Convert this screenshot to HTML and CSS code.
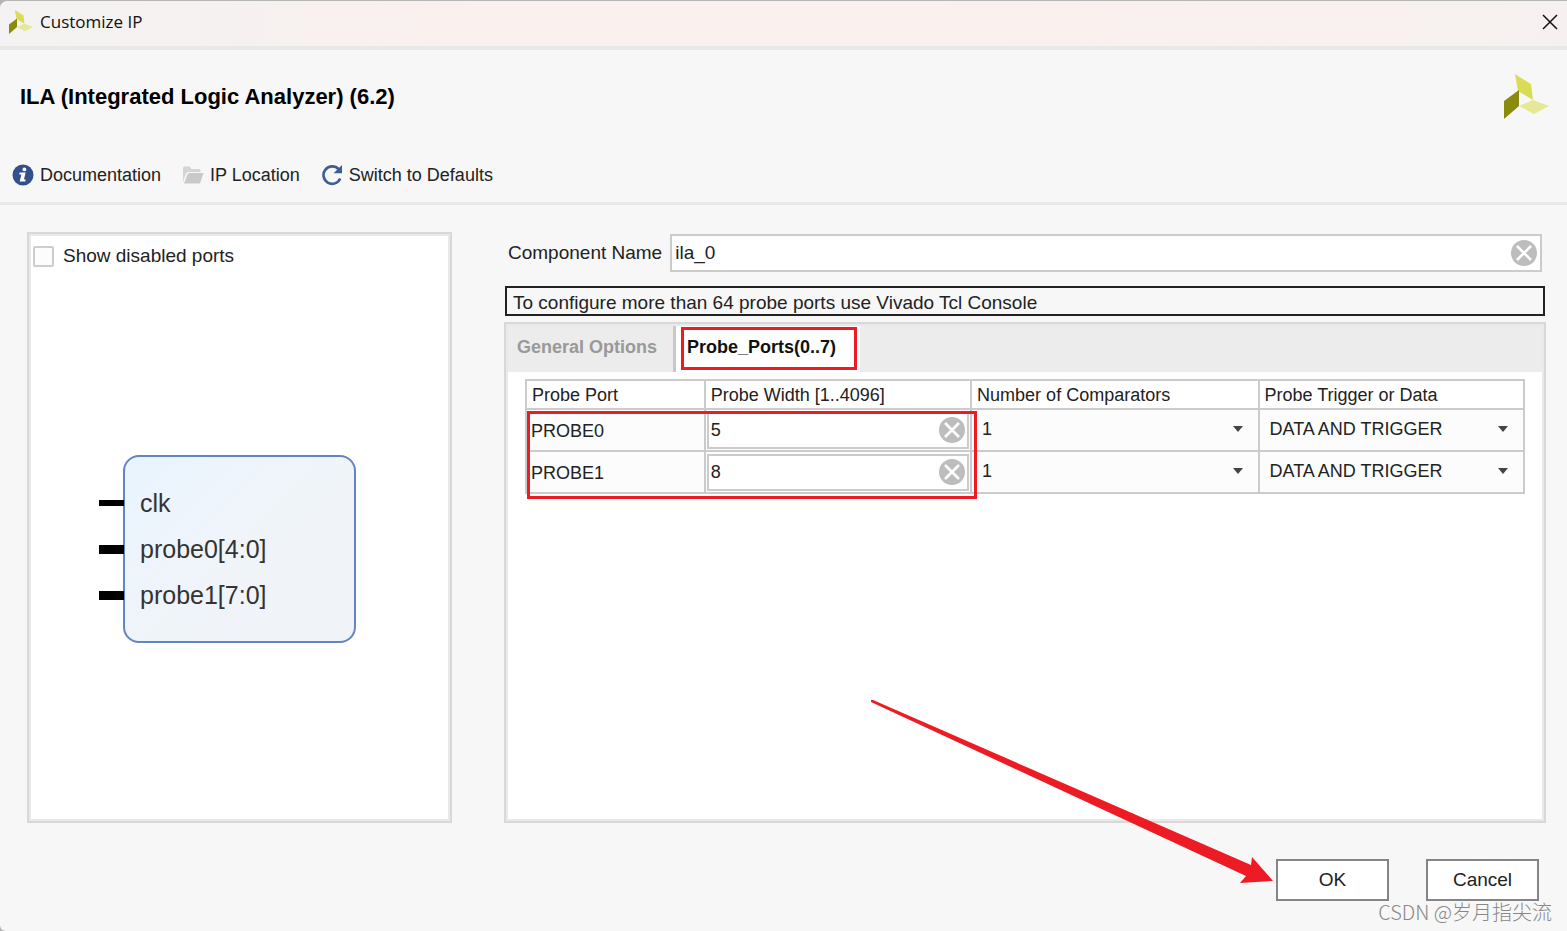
FILE: index.html
```html
<!DOCTYPE html>
<html lang="en">
<head>
<meta charset="utf-8">
<title>Customize IP</title>
<link rel="stylesheet" href="styles.css">
</head>
<body>
<svg class="defs" aria-hidden="true">
  <symbol id="logo" viewBox="0 0 45 45">
    <path d="M11 0 27 10 29 26 14 17Z" fill="#dbdc55"/>
    <path d="M0 27 15 16V32L0 45Z" fill="#8a8b0c"/>
    <path d="M15 32 29 26 45 32 30 40Z" fill="#e6e896"/>
  </symbol>
  <symbol id="clear" viewBox="0 0 26 26">
    <circle cx="13" cy="13" r="13" fill="#bdbdbd"/>
    <path d="M6 6 20 20M20 6 6 20" stroke="#fff" stroke-width="2.6" fill="none"/>
  </symbol>
  <symbol id="caret" viewBox="0 0 10 6">
    <path d="M0 0H10L5 6Z" fill="#444"/>
  </symbol>
</svg>
<main class="dialog">
  <header class="titlebar">
    <svg class="titlebar-logo"><use href="#logo"/></svg>
    <span class="titlebar-text">Customize IP</span>
    <button class="close" type="button" aria-label="Close">
      <svg viewBox="0 0 16 16" width="16" height="16"><path d="M1 1 15 15M15 1 1 15" stroke="#111" stroke-width="1.5"/></svg>
    </button>
  </header>

  <section class="head">
    <div class="head-row">
      <h1>ILA (Integrated Logic Analyzer) (6.2)</h1>
      <svg class="head-logo"><use href="#logo"/></svg>
    </div>
    <nav class="toolbar">
      <button class="tool" type="button">
        <svg viewBox="0 0 22 22" width="22" height="22"><circle cx="11" cy="11" r="10.5" fill="#32508a"/><circle cx="12.400" cy="5.400" r="1.900" fill="#fff"/><path d="M7.600 8.600H13.600L12 15.600H13.700L13.300 17.600H7.700L9.400 10.400H7.200Z" fill="#fff"/></svg>
        Documentation
      </button>
      <button class="tool" type="button">
        <svg viewBox="0 0 22 22" width="22" height="22"><path d="M1 18V4Q1 2.5 2.500 2.500H7.500L9.500 5H17Q18.500 5 18.500 6.500V8H6.500Q4.800 8 4 9.500Z" fill="#d4d4d4"/><path d="M2 19.500 5.500 10.500Q6 9 7.500 9H21.500L18.500 18Q18 19.500 16.500 19.500Z" fill="#c9c9c9"/></svg>
        IP Location
      </button>
      <button class="tool" type="button">
        <svg viewBox="0 0 22 22" width="22" height="22"><path d="M17.600 5.200A8.700 8.700 0 1 0 19.200 14.500" fill="none" stroke="#3e5d94" stroke-width="2.600"/><path d="M21 1V9.200H12.600Z" fill="#3e5d94"/></svg>
        Switch to Defaults
      </button>
    </nav>
  </section>

  <section class="content">
    <div class="panel ports">
      <label class="check"><input type="checkbox">Show disabled ports</label>
      <div class="symbol-area">
        <ul class="symbol">
          <li>clk</li>
          <li class="bus">probe0[4:0]</li>
          <li class="bus">probe1[7:0]</li>
        </ul>
      </div>
    </div>

    <div class="config">
      <div class="name-row">
        <label for="component">Component Name</label>
        <div class="field">
          <input id="component" type="text" value="ila_0">
          <button class="clear" type="button" aria-label="Clear name"><svg><use href="#clear"/></svg></button>
        </div>
      </div>
      <p class="note">To configure more than 64 probe ports use Vivado Tcl Console</p>
      <div class="panel options">
        <div class="tabs" role="tablist">
          <button class="tab" type="button" role="tab" aria-selected="false">General Options</button>
          <button class="tab tab-active" type="button" role="tab" aria-selected="true">Probe_Ports(0..7)</button>
        </div>
        <div class="table-wrap">
          <table>
            <colgroup><col class="c-port"><col class="c-width"><col class="c-comp"><col class="c-data"></colgroup>
            <thead>
              <tr><th>Probe Port</th><th>Probe Width [1..4096]</th><th>Number of Comparators</th><th>Probe Trigger or Data</th></tr>
            </thead>
            <tbody>
              <tr>
                <td class="port">PROBE0</td>
                <td><div class="field"><input type="text" value="5" aria-label="PROBE0 width"><button class="clear" type="button" aria-label="Clear PROBE0 width"><svg><use href="#clear"/></svg></button></div></td>
                <td><div class="drop"><select aria-label="PROBE0 comparators"><option>1</option></select><svg><use href="#caret"/></svg></div></td>
                <td><div class="drop"><select aria-label="PROBE0 trigger or data"><option>DATA AND TRIGGER</option></select><svg><use href="#caret"/></svg></div></td>
              </tr>
              <tr>
                <td class="port">PROBE1</td>
                <td><div class="field"><input type="text" value="8" aria-label="PROBE1 width"><button class="clear" type="button" aria-label="Clear PROBE1 width"><svg><use href="#clear"/></svg></button></div></td>
                <td><div class="drop"><select aria-label="PROBE1 comparators"><option>1</option></select><svg><use href="#caret"/></svg></div></td>
                <td><div class="drop"><select aria-label="PROBE1 trigger or data"><option>DATA AND TRIGGER</option></select><svg><use href="#caret"/></svg></div></td>
              </tr>
            </tbody>
          </table>
          <div class="mark-rows"></div>
        </div>
      </div>
    </div>
  </section>

  <footer class="actions">
    <button class="action" type="button">OK</button>
    <button class="action" type="button">Cancel</button>
    <svg class="arrow" viewBox="0 0 402 184" aria-hidden="true"><path d="M0 0 2 0 380 165 381 157 402 181 369 183 375 176 0 2Z" fill="#ed1c24"/></svg>
    <span class="watermark">CSDN @岁月指尖流</span>
  </footer>
</main>
</body>
</html>
```

FILE: styles.css
```css
* { box-sizing: border-box; }

body {
  margin: 0;
  background: #b5b5b5;
  color: #222;
  font: 19px/24px "Liberation Sans", Arial, sans-serif;
}

button, input, select {
  font: inherit;
  color: inherit;
  margin: 0;
  padding: 0;
  border: 0;
  border-radius: 0;
  background: none;
}

.defs { display: none; }

.dialog {
  display: flex;
  flex-direction: column;
  min-height: 100vh;
  overflow: hidden;
  border-top: 1px solid #b5b5b5;
  border-radius: 8px 0 0 6px;
  background: #f7f7f7;
}

.titlebar {
  display: flex;
  align-items: center;
  height: 49px;
  padding: 0 9px 3px;
  border-bottom: 4px solid #e8e8e8;
  background: linear-gradient(90deg, #f4f2f2, #f6f1f0 16%, #faf0ee 30%, #faf0ee 60%, #f6f1f0);
  color: #111;
  font: 17px/24px "Open Sans", "Noto Sans", sans-serif;
}
.titlebar-logo { width: 24px; height: 24px; margin-right: 7px; }
.close { display: flex; margin-left: auto; }

.head {
  padding: 24px 18px 15px 12px;
  border-bottom: 3px solid #e8e8e8;
}
.head-row {
  display: flex;
  justify-content: space-between;
  align-items: center;
  padding-left: 8px;
}
h1 {
  margin: 0;
  color: #000;
  font-size: 22px;
  line-height: 24px;
}
.head-logo { width: 45px; height: 45px; }

.toolbar { display: flex; gap: 21px; margin-top: 44px; font-size: 18px; }
.tool { display: flex; align-items: center; gap: 6px; }

.content {
  display: flex;
  flex: 1;
  align-items: stretch;
  gap: 52px;
  padding: 27px 21px 0 27px;
}
.panel {
  border: 2px solid #d8d8d8;
  background: #fff;
  box-shadow: inset 0 0 0 2px #e9e9e9;
}
.ports {
  display: flex;
  flex-direction: column;
  flex: 0 0 425px;
}
.check { display: flex; align-items: center; gap: 9px; padding: 10px 4px 0; }
.check input {
  appearance: none;
  width: 21px;
  height: 21px;
  border: 2px solid #cdcdcd;
  border-radius: 2px;
  background: #fcfcfc;
}
.symbol-area {
  display: flex;
  flex: 1;
  align-items: center;
  justify-content: center;
  padding-top: 9px;
}
.symbol {
  width: 233px;
  margin: 0;
  padding: 23px 0;
  border: 2px solid #6585c0;
  border-radius: 16px;
  background: linear-gradient(135deg, #e9f4fe, #eff4fc 35%, #f0f4f8 60%);
  color: #333;
  font-size: 25px;
  line-height: 46px;
  list-style: none;
}
.symbol li { display: flex; align-items: center; gap: 16px; margin-left: -26px; }
.symbol li::before { content: ""; width: 25px; height: 6px; background: #000; }
.symbol .bus::before { height: 9px; }

.config { display: flex; flex-direction: column; flex: 1; min-width: 0; }
.name-row { display: flex; align-items: center; gap: 8px; padding: 2px 4px 0; }
.field {
  display: flex;
  flex: 1;
  align-items: center;
  height: 38px;
  padding: 0 3px;
  border: 2px solid #cbcbcb;
  background: #fff;
}
.field input { flex: 1; min-width: 0; outline: 0; }
.clear { display: flex; }
.clear svg { width: 26px; height: 26px; }

.note {
  margin: 14px 1px 6px;
  padding: 4px 6px 0;
  border: 2px solid #222;
  line-height: 22px;
}

.options { flex: 1; padding: 2px; }
.tabs { display: flex; height: 46px; background: #ececec; }
.tab {
  width: 168px;
  padding: 0 0 4px 9px;
  border-right: 3px solid #c8c8c8;
  color: #999;
  font-size: 18px;
  font-weight: bold;
  text-align: left;
}
.tab-active {
  position: relative;
  width: 184px;
  padding-left: 11px;
  border-right: 0;
  background: #fff;
  color: #111;
}
.tab-active::after {
  content: "";
  position: absolute;
  inset: 1px 3px 2px 5px;
  border: 3px solid #ed1c24;
}

.table-wrap { position: relative; margin: 7px 17px; font-size: 18px; }
table { width: 100%; border-collapse: collapse; table-layout: fixed; }
.c-port { width: 17.9%; }
.c-width { width: 26.7%; }
.c-comp { width: 28.8%; }
.c-data { width: 26.6%; }
th, td { padding: 0; border: 2px solid #cbcbcb; font-weight: normal; text-align: left; }
th { height: 29px; padding-left: 5px; }
td { height: 42px; background: #fcfcfc; }
.port { padding: 2px 0 0 4px; }
td .field { margin: 0 1px; height: 37px; padding: 0 2px 1px; }
.drop { display: flex; align-items: center; height: 36px; padding: 0 15px 3px 10px; }
.drop select { flex: 1; min-width: 0; appearance: none; outline: 0; }
.drop svg { width: 10px; height: 6px; }
.mark-rows {
  position: absolute;
  top: 32px;
  left: 2px;
  width: 45%;
  height: 88px;
  border: 3px solid #ed1c24;
}

.actions {
  position: relative;
  display: flex;
  justify-content: flex-end;
  gap: 37px;
  padding: 36px 28px 30px;
}
.action {
  width: 113px;
  height: 42px;
  border: 2px solid #858585;
  background: #fff;
}
.arrow { position: absolute; right: 294px; bottom: 47px; width: 402px; height: 184px; }
.watermark {
  position: absolute;
  right: 15px;
  bottom: 7px;
  color: #888;
  font: 20px/24px "Noto Sans CJK SC", sans-serif;
  font-weight: 300;
}
```
